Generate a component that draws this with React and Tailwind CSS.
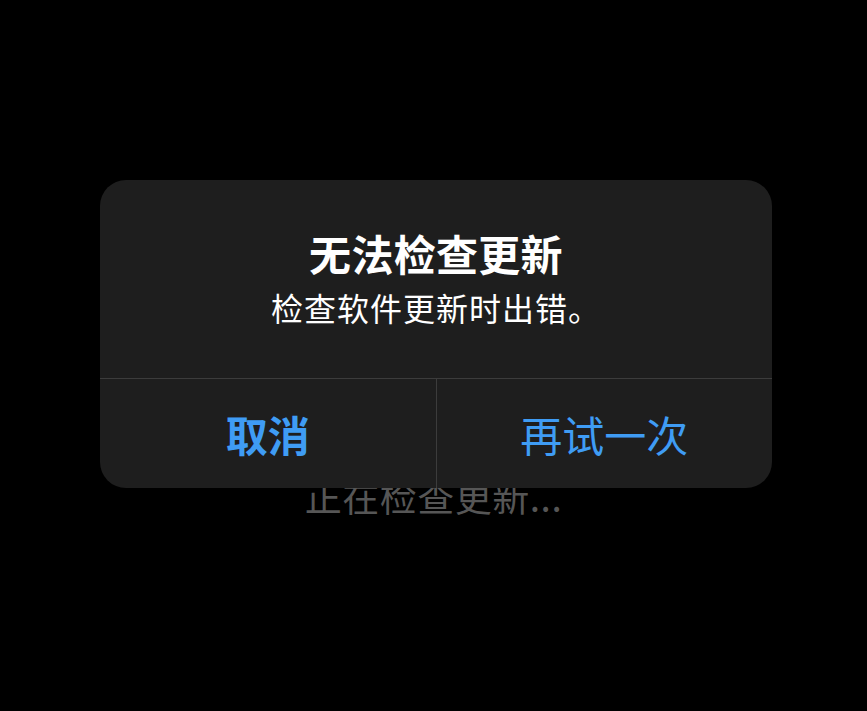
import React from "react";

export default function App() {
  const font = { fontFamily: '"Noto Sans CJK SC", "Noto Sans", sans-serif' };
  return (
    <div className="relative w-[867px] h-[711px] bg-black overflow-hidden" style={font}>
      <div className="pt-[471px] flex justify-center">
        <div className="text-[37px] leading-[50px] text-[#565656] tracking-[0.5px]">正在检查更新...</div>
      </div>
      <div className="absolute left-[100px] top-[180px] w-[672px] h-[308px] rounded-[26px] bg-[#1e1e1e] flex flex-col overflow-hidden">
        <div className="pt-[48px] pb-[51px] flex flex-col items-center">
          <div className="text-[42px] leading-[50px] font-semibold text-white tracking-[0.3px]">无法检查更新</div>
          <div className="mt-[9px] text-[32px] leading-[40px] text-white tracking-[1px]">检查软件更新时出错。</div>
        </div>
        <div className="h-px bg-[#3c3c3c]" />
        <div className="flex flex-1">
          <div className="flex-1 flex items-center justify-center text-[42px] font-semibold text-[#3f9cf4]">取消</div>
          <div className="w-px bg-[#3c3c3c]" />
          <div className="flex-1 flex items-center justify-center text-[42px] text-[#3f9cf4]">再试一次</div>
        </div>
      </div>
    </div>
  );
}
